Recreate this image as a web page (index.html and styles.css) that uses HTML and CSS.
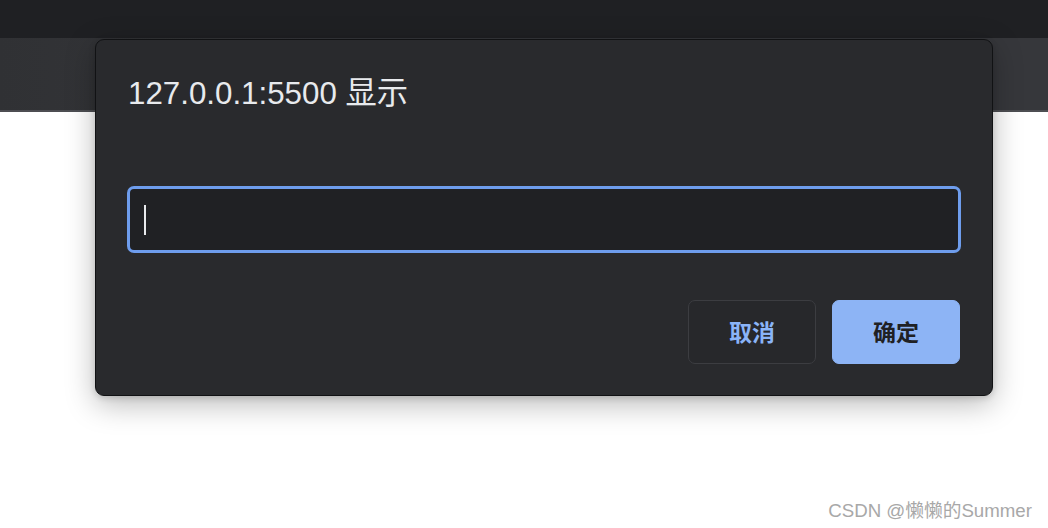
FILE: index.html
```html
<!DOCTYPE html>
<html lang="zh-CN">
<head>
<meta charset="utf-8">
<title>prompt</title>
<link rel="stylesheet" href="styles.css">
</head>
<body>
<div class="chrome">
  <div class="tabbar"></div>
  <div class="toolbar"></div>
</div>
<main class="page"></main>

<div class="dialog" role="dialog">
  <div class="dialog-title">127.0.0.1:5500 显示</div>
  <div class="field"><span class="caret"></span></div>
  <div class="actions">
    <button class="btn btn-cancel">取消</button>
    <button class="btn btn-ok">确定</button>
  </div>
</div>

<div class="watermark">CSDN @懒懒的Summer</div>
</body>
</html>
```

FILE: styles.css
```css
html, body {
  margin: 0;
  padding: 0;
  background: #ffffff;
  width: 1048px;
  height: 528px;
  overflow: hidden;
  font-family: "Liberation Sans", "Noto Sans CJK SC", sans-serif;
}

.chrome {
  display: flex;
  flex-direction: column;
}

.tabbar {
  height: 38px;
  background: #1f2023;
}

.toolbar {
  height: 72px;
  background: linear-gradient(90deg, #303134 0%, #36373b 30%, #36373b 100%);
  border-bottom: 2px solid #4d4e52;
}

.page {
  height: 400px;
  background: #ffffff;
}

.dialog {
  position: absolute;
  left: 95px;
  top: 39px;
  width: 834px;
  padding: 36px 31px 31px 31px;
  background: #292a2d;
  border: 1px solid #111214;
  border-radius: 9px;
  box-shadow: 0 8px 30px rgba(0, 0, 0, 0.28), 0 2px 6px rgba(0, 0, 0, 0.15);
  display: flex;
  flex-direction: column;
}

.dialog-title {
  height: 36px;
  line-height: 36px;
  font-size: 31.3px;
  color: #e8eaed;
  padding-left: 1px;
  white-space: nowrap;
}

.field {
  margin-top: 74px;
  height: 61px;
  border: 3px solid #6e9ded;
  border-radius: 7px;
  background: #202124;
  display: flex;
  align-items: center;
  padding-left: 14px;
}

.caret {
  width: 2px;
  height: 30px;
  background: #e8eaed;
}

.actions {
  margin-top: 47px;
  display: flex;
  justify-content: flex-end;
  gap: 16px;
  padding-right: 1px;
}

.btn {
  width: 128px;
  height: 64px;
  border-radius: 7px;
  font-family: "Noto Sans CJK SC", sans-serif;
  font-size: 23px;
  font-weight: 700;
  padding: 0 0 3px 0;
  cursor: default;
}

.btn-cancel {
  background: #27282b;
  border: 1px solid #3c3d41;
  color: #8ab4f8;
}

.btn-ok {
  background: #8db4f5;
  border: 1px solid #8db4f5;
  color: #202124;
}

.watermark {
  position: absolute;
  right: 16px;
  bottom: 6px;
  font-size: 18.7px;
  line-height: 22px;
  color: #a8a8a8;
  text-shadow: 0 0 1px rgba(255, 255, 255, 0.8);
  white-space: nowrap;
}
```
